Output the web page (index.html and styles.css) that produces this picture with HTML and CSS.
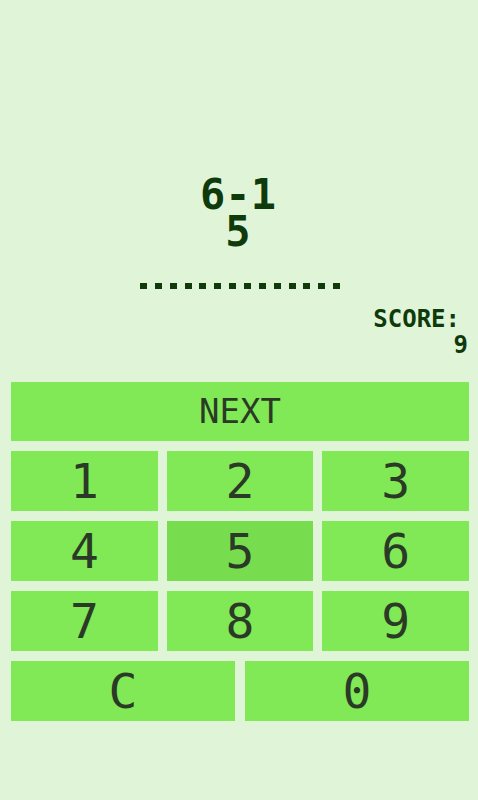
FILE: index.html
```html
<!DOCTYPE html>
<html>
<head>
<meta charset="utf-8">
<link rel="stylesheet" href="styles.css">
</head>
<body>
<div class="app">
  <div class="display">
    <div class="equation">
      <div class="question">6-1</div>
      <div class="answer">5</div>
    </div>
    <div class="input-dots"></div>
    <div class="score">
      <div class="score-label">SCORE:</div>
      <div class="score-value">9</div>
    </div>
  </div>
  <div class="keypad">
    <button class="key key-next">NEXT</button>
    <div class="row row3">
      <button class="key">1</button>
      <button class="key">2</button>
      <button class="key">3</button>
    </div>
    <div class="row row3">
      <button class="key">4</button>
      <button class="key key-pressed">5</button>
      <button class="key">6</button>
    </div>
    <div class="row row3">
      <button class="key">7</button>
      <button class="key">8</button>
      <button class="key">9</button>
    </div>
    <div class="row row2">
      <button class="key">C</button>
      <button class="key">0</button>
    </div>
  </div>
</div>
</body>
</html>
```
FILE: styles.css
```css
html, body {
  margin: 0;
  padding: 0;
  background: #e0f5d8;
}
body {
  width: 478px;
  height: 800px;
  overflow: hidden;
  font-family: "DejaVu Sans Mono", "Liberation Mono", monospace;
  font-weight: bold;
}
.app {
  display: flex;
  flex-direction: column;
  padding: 0 9px 0 11px;
}
.display {
  height: 382px;
  display: flex;
  flex-direction: column;
  align-items: center;
}
.equation {
  margin-top: 176px;
  color: #0f3a0c;
  font-size: 42px;
  line-height: 37px;
  text-align: center;
}
.question { margin-right: 4px; }
.answer { margin-right: 4px; }
.input-dots {
  margin-top: 33px;
  width: 200px;
  height: 6px;
  background: repeating-linear-gradient(to right, #0f3a0c 0, #0f3a0c 7px, transparent 7px, transparent 14.85px);
}
.score {
  align-self: stretch;
  margin-top: 18px;
  color: #0f3a0c;
  font-size: 24px;
  line-height: 24px;
  text-align: right;
}
.score-label { padding-right: 9px; }
.score-value { padding-right: 1px; margin-top: 2px; }
.keypad {
  display: flex;
  flex-direction: column;
  gap: 10px;
}
.row {
  display: grid;
  gap: 9px;
}
.row3 { grid-template-columns: 1fr 1fr 1fr; }
.row2 { grid-template-columns: 1fr 1fr; gap: 10px; }
.key {
  height: 60px;
  border: none;
  margin: 0;
  padding: 0;
  background: #80e955;
  color: #2b3a27;
  font-family: "DejaVu Sans Mono", "Liberation Mono", monospace;
  font-weight: normal;
  font-size: 48px;
  line-height: 60px;
  text-align: center;
}
.key-next {
  height: 59px;
  font-size: 34px;
  line-height: 59px;
}
.key-pressed {
  background: #77dd4e;
}
```
